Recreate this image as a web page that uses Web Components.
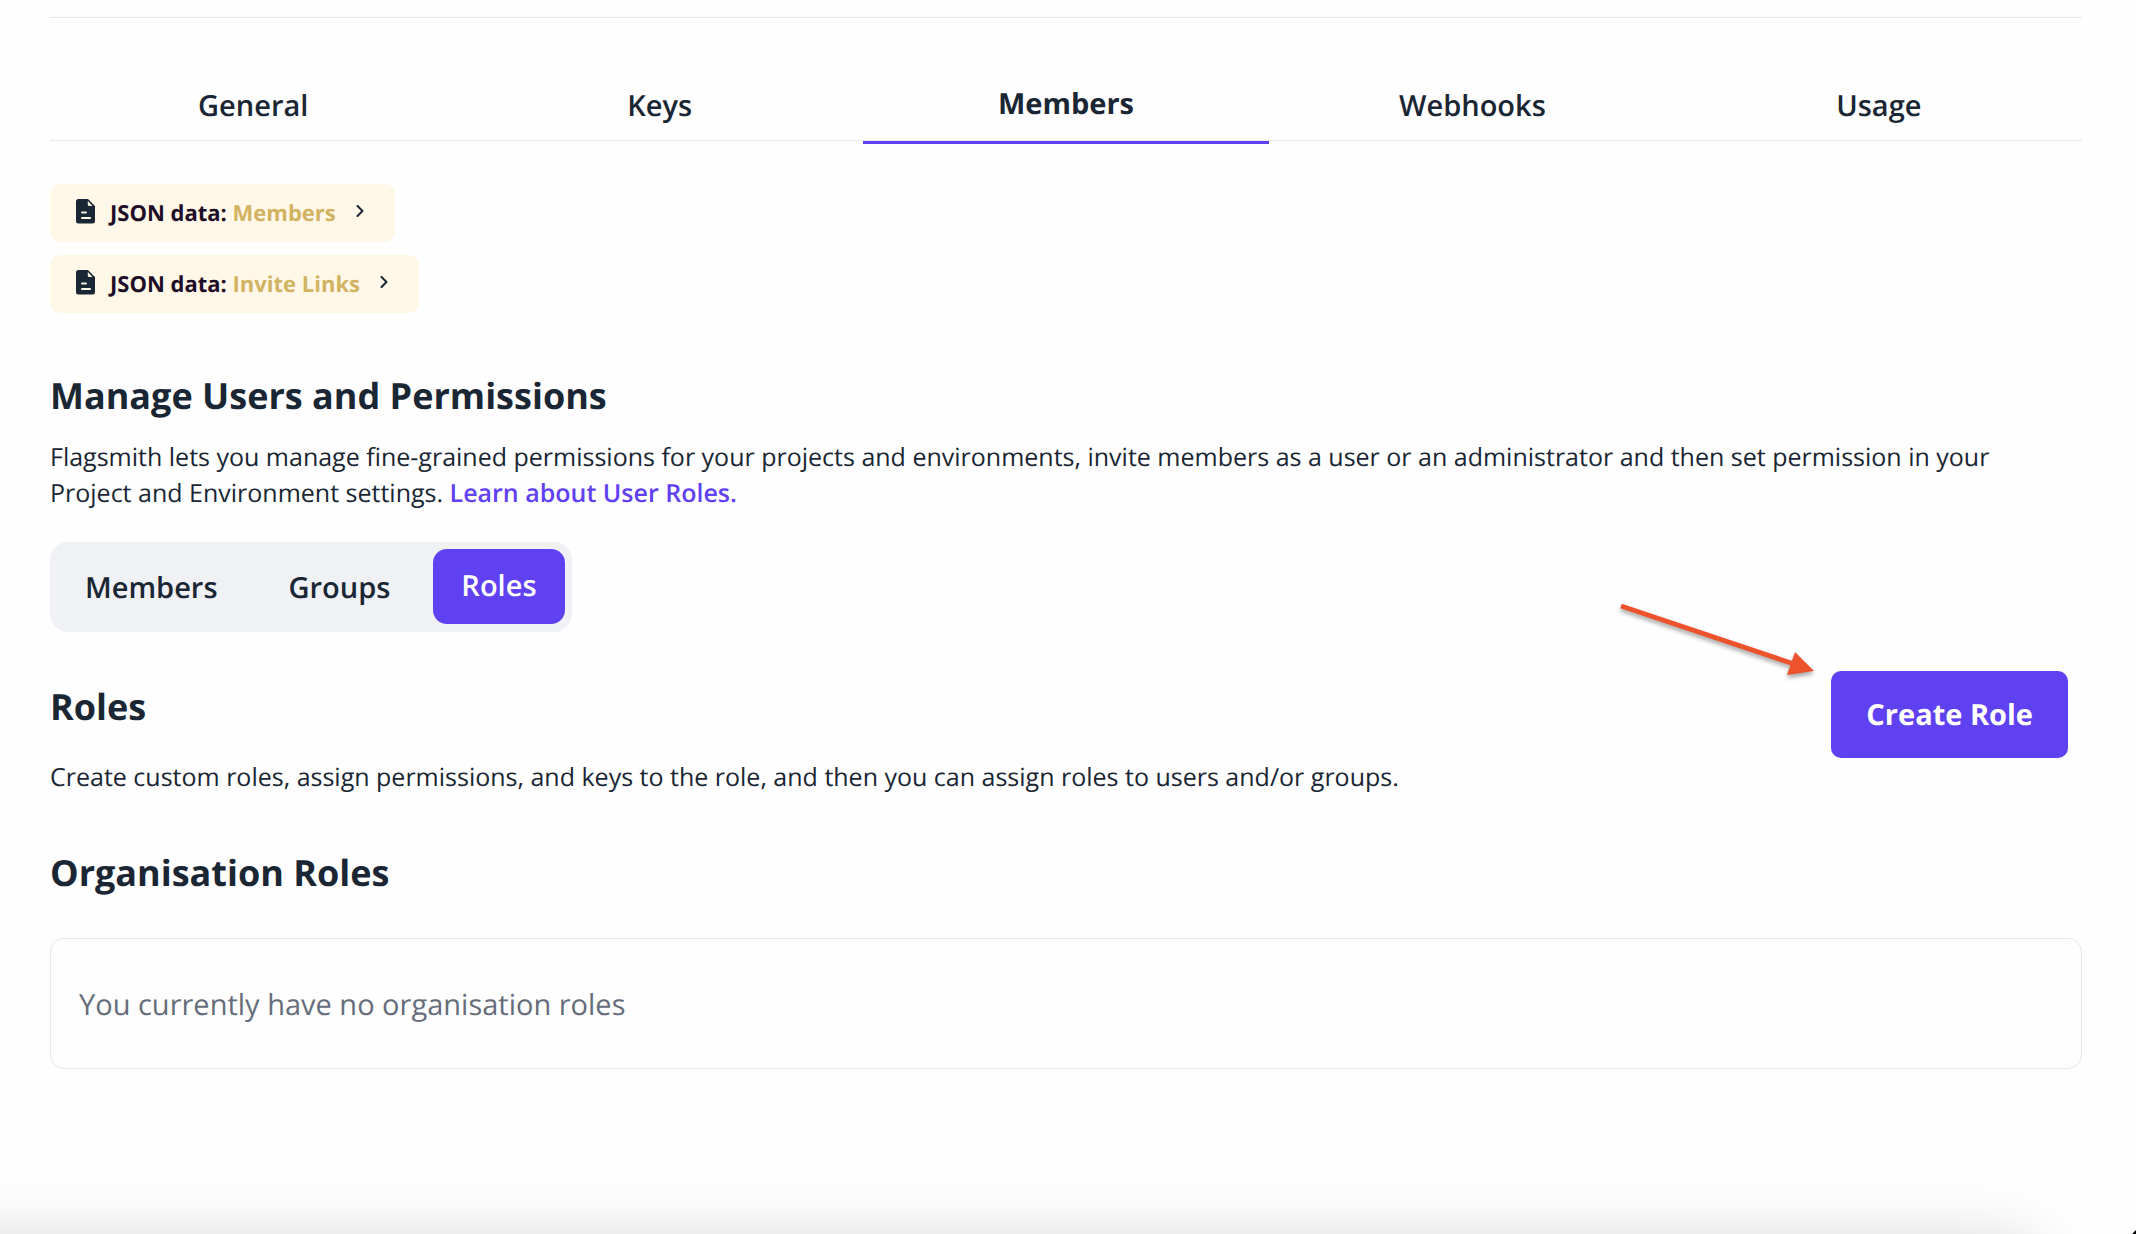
<!DOCTYPE html>
<html lang="en">
<head>
<meta charset="utf-8">
<title>Organisation Settings</title>
<style>
  :root {
    --ink: #1a2634;
    --primary: #5f41f2;
    --line: #e7e7e9;
    --muted: #656d7b;
    --cream: #fff8e8;
  }
  body {
    margin: 0;
    background: #fefefe;
    color: var(--ink);
    font-family: "Open Sans", sans-serif;
    font-size: 25px;
    line-height: 36px;
    text-rendering: geometricPrecision;
  }
</style>
</head>
<body>
<settings-page></settings-page>

<script>
  function define(name, html) {
    const template = document.createElement('template');
    template.innerHTML = '<style>*{box-sizing:border-box}button{font:inherit;color:inherit;text-rendering:inherit;border:0;background:none;margin:0;padding:0;cursor:pointer}h2,p{margin:0}</style>' + html;
    customElements.define(name, class extends HTMLElement {
      constructor() {
        super();
        this.attachShadow({ mode: 'open' }).append(template.content.cloneNode(true));
      }
    });
  }

  define('tab-item', `
    <style>
      :host { display: flex; flex: 1 1 0; min-width: 0; }
      button { flex: 1; height: 76px; padding-top: 6px; font-size: 29px; line-height: 40px; font-weight: 600; }
      :host([active]) { margin-bottom: -3px; }
      :host([active]) button { height: 79px; padding-top: 2px; font-weight: 700; border-bottom: 3px solid var(--primary); }
    </style>
    <button type="button"><slot></slot></button>`);

  define('tab-bar', `
    <style>
      :host { display: block; border-top: 1px solid var(--line); padding-top: 47px; }
      nav { display: flex; height: 76px; background: linear-gradient(var(--line), var(--line)) bottom / 100% 1px no-repeat; }
    </style>
    <nav><slot></slot></nav>`);

  define('json-link', `
    <style>
      :host { display: flex; }
      button { display: flex; align-items: center; height: 58px; padding: 0 31px 0 25px; border-radius: 10px; background: var(--cream); font-size: 22px; line-height: 30px; font-weight: 700; color: #1e0d26; white-space: nowrap; }
      .name { color: #d1b361; }
      .doc { width: 20px; height: 26px; margin: 0 15px 4px 0; }
      .chevron { width: 8px; height: 12px; margin: 0 0 4px 20px; }
    </style>
    <button type="button">
      <svg class="doc" viewBox="0 0 20 26" aria-hidden="true">
        <path fill="#1a2634" d="M3.500 1h9.500L20 8v15a2.500 2.500 0 0 1-2.500 2.500h-14A2.500 2.500 0 0 1 1 23V3.500A2.500 2.500 0 0 1 3.500 1z"/>
        <path fill="#fff8e8" d="M12.800 3v3.500q0 1.500 1.500 1.500H17.500z"/>
        <path stroke="#fff8e8" stroke-width="2" stroke-linecap="round" d="M7 14.500h4M7 20h8"/>
      </svg>
      <span>JSON data: <span class="name"><slot></slot></span></span>
      <svg class="chevron" viewBox="0 0 8 12" aria-hidden="true">
        <path fill="none" stroke="#1a2634" stroke-width="2" stroke-linecap="round" stroke-linejoin="round" d="M1.500 1 6.500 6l-5 5"/>
      </svg>
    </button>`);

  define('page-heading', `
    <style>
      :host { display: block; }
      h2 { font-size: 36px; line-height: 48px; font-weight: 700; }
    </style>
    <h2><slot></slot></h2>`);

  define('segment-item', `
    <style>
      :host { display: block; }
      button { height: 75px; padding: 2px 28px 0; border-radius: 14px; font-size: 29px; line-height: 40px; font-weight: 600; }
      :host([active]) button { background: var(--primary); color: #fff; padding: 0 28px 2px; }
    </style>
    <button type="button"><slot></slot></button>`);

  define('segment-control', `
    <style>
      :host { display: flex; }
      div { display: flex; gap: 15px; padding: 7px 7px 8px; border-radius: 18px; background: #eff1f4; }
    </style>
    <div><slot></slot></div>`);

  define('primary-button', `
    <style>
      :host { display: block; }
      button { height: 87px; padding: 0 35px; border-radius: 10px; background: var(--primary); color: #fff; font-size: 29px; line-height: 40px; font-weight: 700; white-space: nowrap; }
    </style>
    <button type="button"><slot></slot></button>`);

  define('pointer-arrow', `
    <style>
      :host { display: block; position: absolute; right: calc(100% + 9px); top: -76px; pointer-events: none; }
      svg { display: block; width: 210px; height: 90px; overflow: visible; filter: drop-shadow(0 3px 2px rgba(0, 0, 0, .35)); }
    </style>
    <svg viewBox="0 0 210 90" aria-hidden="true">
      <path stroke="#ec522b" stroke-width="5" d="M9 11 182 69"/>
      <path fill="#ec522b" d="M183 57 202 76l-27 4z"/>
    </svg>`);

  define('empty-panel', `
    <style>
      :host { display: block; border: 1px solid var(--line); border-radius: 14px; padding: 45px 28px 42px; color: var(--muted); font-size: 29px; line-height: 42px; }
    </style>
    <slot></slot>`);

  define('window-edge', `
    <style>
      :host { display: block; position: fixed; inset: auto 0 0 0; height: 80px; overflow: hidden; pointer-events: none; }
      .shade { position: absolute; top: 100%; left: -120px; right: 84px; height: 200px; border-radius: 60px; box-shadow: 0 0 58px rgba(0, 0, 0, .13); }
      svg { position: absolute; right: 0; bottom: 0; width: 4px; height: 4px; }
    </style>
    <div class="shade"></div>
    <svg viewBox="0 0 4 4" aria-hidden="true"><path d="M4 0v4H0z"/></svg>`);

  define('settings-page', `
    <style>
      :host { display: block; padding: 17px 54px 120px 50px; }
      .links { display: flex; flex-direction: column; gap: 13px; margin-top: 43px; }
      .intro { margin-top: 59px; }
      .intro p { margin-top: 19px; padding-right: 36px; }
      a { color: var(--primary); font-weight: 600; text-decoration: none; }
      segment-control { margin-top: 31px; }
      .roles { display: flex; justify-content: space-between; align-items: flex-start; margin-top: 39px; padding-right: 14px; }
      .roles p { margin-top: 28px; }
      .action { position: relative; }
      .roles .text { padding-top: 12px; }
      .org { margin-top: 54px; }
      empty-panel { margin-top: 41px; }
    </style>
    <tab-bar>
      <tab-item>General</tab-item>
      <tab-item>Keys</tab-item>
      <tab-item active>Members</tab-item>
      <tab-item>Webhooks</tab-item>
      <tab-item>Usage</tab-item>
    </tab-bar>
    <div class="links">
      <json-link>Members</json-link>
      <json-link>Invite Links</json-link>
    </div>
    <section class="intro">
      <page-heading>Manage Users and Permissions</page-heading>
      <p>Flagsmith lets you manage fine-grained permissions for your projects and environments, invite members as a user or an administrator and then set permission in your Project and Environment settings. <a href="#user-roles">Learn about User Roles.</a></p>
    </section>
    <segment-control>
      <segment-item>Members</segment-item>
      <segment-item>Groups</segment-item>
      <segment-item active>Roles</segment-item>
    </segment-control>
    <section class="roles">
      <div class="text">
        <page-heading>Roles</page-heading>
        <p>Create custom roles, assign permissions, and keys to the role, and then you can assign roles to users and/or groups.</p>
      </div>
      <div class="action">
        <primary-button>Create Role</primary-button>
        <pointer-arrow></pointer-arrow>
      </div>
    </section>
    <section class="org">
      <page-heading>Organisation Roles</page-heading>
      <empty-panel>You currently have no organisation roles</empty-panel>
    </section>
    <window-edge></window-edge>`);
</script>
</body>
</html>
